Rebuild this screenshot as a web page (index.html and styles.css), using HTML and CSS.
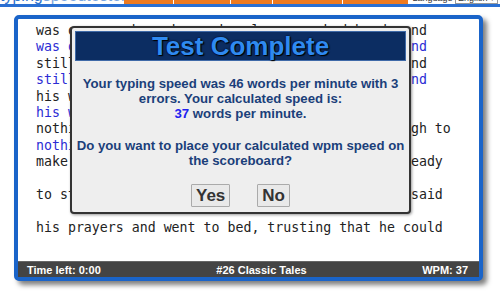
FILE: index.html
```html
<!DOCTYPE html>
<html lang="en">
<head>
  <meta charset="UTF-8">
  <title>Typing Test</title>
  <link rel="stylesheet" href="styles.css">
</head>
<body>

  <div class="top">
    <div class="logo"><span class="logo-main">typing</span>speedtester</div>
    <div class="nav">
      <div class="nav-item w1"></div>
      <div class="nav-item w2"></div>
      <div class="nav-item w3"></div>
      <div class="nav-item w4"></div>
      <div class="nav-item w5"></div>
    </div>
    <div class="lang">Language <span class="lang-select">English &#9662;</span></div>
  </div>
  <div class="topbar"></div>

  <div class="wrap">
    <div class="board">
      <div class="text">
        <div class="line">was once a shoemaker, who always worked hard, and</div>
        <div class="line typed">was once a shoemaker, who always worked hard, and</div>
        <div class="line">still he was poor, and could not earn enough, and</div>
        <div class="line typed">still he was poor, and could not earn enough, and</div>
        <div class="line">his wealth was gone, save only leather enough</div>
        <div class="line typed">his wealth was gone, save only leather enough</div>
        <div class="line">nothing but leather for one pair of shoes, enough to</div>
        <div class="line typed">nothing but</div>
        <div class="line">make a pair of shoes. So he cut them out, all ready</div>
        <div class="line"> </div>
        <div class="line">to start work very early next morning; then he said</div>
        <div class="line"> </div>
        <div class="line">his prayers and went to bed, trusting that he could</div>
        <div class="line"> </div>
      </div>
      <div class="status">
        <span>Time left: 0:00</span>
        <span>#26 Classic Tales</span>
        <span>WPM: 37</span>
      </div>

      <div class="dialog">
        <div class="dialog-title">Test Complete</div>
        <p class="dialog-text">Your typing speed was 46 words per minute with 3 errors. Your calculated speed is:<br><span class="speed">37</span> words per minute.</p>
        <p class="dialog-text">Do you want to place your calculated wpm speed on the scoreboard?</p>
        <div class="buttons">
          <button class="btn">Yes</button>
          <button class="btn">No</button>
        </div>
      </div>
    </div>
  </div>

</body>
</html>
```

FILE: styles.css
```css
body {
  margin: 0;
  background: #fff;
  font-family: "Liberation Sans", Arial, sans-serif;
}

.top {
  display: flex;
  align-items: flex-end;
  height: 4px;
  overflow: hidden;
}

.logo {
  width: 124px;
  font-size: 16px;
  line-height: 16px;
  color: #7aa6e0;
  white-space: nowrap;
  overflow: hidden;
}

.logo-main {
  color: #2f74d0;
}

.nav {
  display: flex;
  align-self: stretch;
  background: #ef7a1f;
}

.nav-item {
  border-left: 1px solid #fff;
}

.nav-item.w1 { width: 49px; border-left: none; }
.nav-item.w2 { width: 56px; }
.nav-item.w3 { width: 41px; }
.nav-item.w4 { width: 69px; }
.nav-item.w5 { width: 65px; }

.lang {
  margin-left: auto;
  padding-right: 2px;
  font-size: 9px;
  line-height: 9px;
  color: #333;
  white-space: nowrap;
}

.lang-select {
  display: inline-block;
  border: 1px solid #999;
  padding: 0 2px;
  background: #fff;
}

.topbar {
  height: 3px;
  background: #2a6fd2;
}

.wrap {
  padding: 8px 17px 13px 14px;
}

.board {
  position: relative;
  border: 4px solid #1a64c9;
  border-radius: 5px;
  background: #fff;
  box-shadow: 4px 4px 5px rgba(0, 0, 0, 0.5);
}

.text {
  height: 238px;
  padding: 4px 0 0 18px;
  overflow: hidden;
  font-family: "DejaVu Sans Mono", monospace;
  font-size: 13.25px;
  line-height: 16.4px;
  color: #222;
}

.line {
  white-space: pre;
  height: 16.4px;
}

.line.typed {
  color: #2b2bd4;
}

.status {
  display: flex;
  justify-content: space-between;
  align-items: center;
  height: 16px;
  padding: 0 11px 0 9px;
  background: #444;
  border-top: 1px solid #666;
  box-sizing: border-box;
  color: #fff;
  font-size: 11px;
  font-weight: bold;
}

.dialog {
  position: absolute;
  left: 52px;
  top: 7px;
  width: 341px;
  box-sizing: border-box;
  padding: 3px 3px 5px;
  background: #eee;
  border: 2px solid #333;
  border-radius: 4px;
  box-shadow: 1px 1px 3px rgba(0, 0, 0, 0.4);
  text-align: center;
}

.dialog-title {
  height: 30px;
  box-sizing: border-box;
  background: #0c2d62;
  border: 1px solid #3f6aa8;
  color: #2f8af0;
  font-size: 26px;
  font-weight: bold;
  line-height: 28px;
  text-shadow: 0 0 2px #000, 1px 1px 1px #000;
}

.dialog-text {
  margin: 15px 0 0;
  font-size: 13.2px;
  font-weight: bold;
  line-height: 15px;
  color: #1b3f7a;
}

.dialog-text + .dialog-text {
  margin-top: 17px;
}

.speed {
  color: #2020f0;
}

.buttons {
  display: flex;
  justify-content: center;
  gap: 27px;
  margin-top: 16px;
}

.btn {
  height: 23px;
  padding: 0 4px;
  background: #e9e9e9;
  border: 1px solid #aaa;
  border-radius: 1px;
  font-family: "Liberation Sans", Arial, sans-serif;
  font-size: 17px;
  font-weight: bold;
  color: #333;
}
```
